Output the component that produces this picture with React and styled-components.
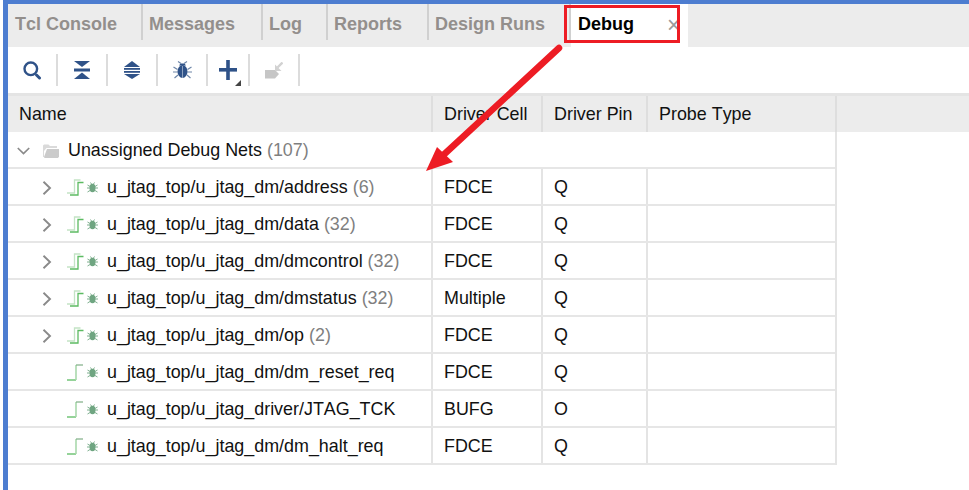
import React from "react";
import styled, { createGlobalStyle } from "styled-components";

const Global = createGlobalStyle`
  html, body { margin: 0; padding: 0; background: #fff; }
  body { font-family: "Liberation Sans", Arial, sans-serif; font-kerning: none; }
  #root { width: 969px; height: 490px; overflow: hidden; }
`;

const Frame = styled.div`
  position: relative;
  width: 966px;
  height: 490px;
  margin-left: 3px;
  box-sizing: border-box;
  border-top: 4px solid #4d7dd0;
  border-left: 5px solid #4d7dd0;
  background: #fff;
  overflow: hidden;
`;

const TabBar = styled.div`
  display: flex;
  height: 43px;
  background: #ececec;
`;

const Tab = styled.div`
  box-sizing: border-box;
  width: ${p => p.$w}px;
  height: 43px;
  padding: 9px 0 0 ${p => p.$pad}px;
  font-size: 18px;
  font-weight: 700;
  line-height: 22px;
  color: ${p => (p.$active ? "#000" : "#938f8c")};
  background: ${p => (p.$active ? "#fff" : "transparent")};
  position: relative;
  &::after {
    content: "";
    display: ${p => (p.$sep ? "block" : "none")};
    position: absolute;
    right: 0;
    top: 0;
    height: 36px;
    width: 2px;
    background: #d0d0d0;
  }
`;

const Close = styled.span`
  position: absolute;
  left: 96px;
  top: 9px;
  font-size: 23px;
  font-weight: 400;
  line-height: 24px;
  color: #9a9a9a;
`;

const Toolbar = styled.div`
  display: flex;
  align-items: center;
  height: 46px;
  background: #fff;
`;

const ToolSlot = styled.div`
  position: relative;
  display: flex;
  align-items: center;
  justify-content: center;
  width: ${p => p.$w}px;
  height: 32px;
  border-right: 2px solid #dcdcdc;
  box-sizing: border-box;
`;

const Corner = styled.span`
  position: absolute;
  right: 7px;
  bottom: 0;
  width: 0;
  height: 0;
  border-left: 6px solid transparent;
  border-bottom: 6px solid #444;
`;

const TableHead = styled.div`
  display: grid;
  grid-template-columns: 425px 110px 105px 189px 1fr;
  height: 39px;
  box-sizing: border-box;
  border-top: 3px solid #e4e4e4;
  background: #ececec;
`;

const HeadCell = styled.div`
  box-sizing: border-box;
  padding-left: 11px;
  border-right: ${p => (p.$last ? "none" : "2px solid #dedede")};
  font-size: 17.9px;
  line-height: 36px;
  color: #111;
`;

const Body = styled.div`
  width: 829px;
  box-sizing: border-box;
  border-right: 2px solid #e4e4e4;
`;

const GroupRow = styled.div`
  display: flex;
  align-items: center;
  height: 37px;
  box-sizing: border-box;
  padding: 2px 0 0 9px;
  border-bottom: 2px solid #e6e6e6;
  font-size: 17.9px;
  color: #111;
  white-space: nowrap;
`;

const Row = styled.div`
  display: grid;
  grid-template-columns: 425px 110px 1fr;
  height: 37px;
  box-sizing: border-box;
  border-bottom: 2px solid #e6e6e6;
`;

const NameCell = styled.div`
  display: flex;
  align-items: center;
  box-sizing: border-box;
  padding: 2px 0 0 34px;
  border-right: 2px solid #e4e4e4;
  font-size: 17.9px;
  color: #111;
  white-space: nowrap;
`;

const Cell = styled.div`
  display: flex;
  align-items: center;
  box-sizing: border-box;
  padding: 2px 0 0 11px;
  border-right: 2px solid #e4e4e4;
  font-size: 17.9px;
  color: #111;
`;

const PinColumn = styled.div`
  display: grid;
  grid-template-columns: 105px;
  font-size: 17.9px;
  color: #111;
`;

const PinValue = styled.span`
  display: flex;
  align-items: center;
  box-sizing: border-box;
  padding: 2px 0 0 11px;
  border-right: 2px solid #e4e4e4;
`;

const Count = styled.span`
  color: #7f7f7f;
  margin-left: 5px;
`;

const IconSlot = styled.span`
  display: inline-flex;
  width: ${p => p.$w}px;
  flex: none;
  align-items: center;
`;

const Overlay = styled.svg`
  position: absolute;
  left: -8px;
  top: -4px;
  width: 969px;
  height: 490px;
  pointer-events: none;
`;

const BLUE = "#2f5288";

const Search = () => (
  <svg width="19" height="19" viewBox="0 0 19 19" fill="none">
    <circle cx="7.8" cy="7.8" r="6.3" stroke={BLUE} strokeWidth="2.4" />
    <path d="M13.500 14l3 3" stroke={BLUE} strokeWidth="3" strokeLinecap="round" />
  </svg>
);
const Collapse = () => (
  <svg width="16" height="18" viewBox="0 0 16 18" fill={BLUE}>
    <path d="M0 0h16L8 6z" />
    <rect x="0" y="7.5" width="16" height="3" />
    <path d="M0 18h16l-8-6.500z" />
  </svg>
);
const Expand = () => (
  <svg width="16" height="18" viewBox="0 0 16 18" fill={BLUE}>
    <path d="M8 0l8 6H0z" />
    <rect x="0" y="7" width="16" height="1.800" />
    <rect x="0" y="10" width="16" height="1.800" />
    <path d="M8 18L0 13h16z" />
  </svg>
);
const BigBug = () => (
  <svg width="19" height="18" viewBox="0 0 19 18" fill="none">
    <ellipse cx="9.500" cy="10.500" rx="5" ry="6.500" fill={BLUE} />
    <path d="M6 4.500h7l-1.500-2h-4z" fill={BLUE} />
    <path d="M9.500 5v12" stroke="#8ea2c0" strokeWidth="1" />
    <path d="M5 .5l3 2M14 .5l-3 2M.5 6l4 2.500M18.500 6l-4 2.500M0 11h5M19 11h-5M1.500 17l3.500-3M17.500 17L14 14" stroke="#6e86a8" strokeWidth="1.200" />
  </svg>
);
const Plus = () => (
  <svg width="18" height="20" viewBox="0 0 18 20" fill={BLUE}>
    <rect x="7.200" y="0" width="3.600" height="20" />
    <rect x="0" y="8" width="18" height="3.600" />
  </svg>
);
const Import = () => (
  <svg width="18" height="17" viewBox="0 0 18 17" fill="#c6c6c6">
    <path d="M0 8h10l4 4-4 4.500H0z" />
    <path d="M17.500 .5l-5 5" stroke="#d2d2d2" strokeWidth="2.400" fill="none" />
    <path d="M10 2.500v6.500h6.500z" fill="#d2d2d2" />
  </svg>
);
const ChevronRight = () => (
  <svg width="10" height="14" viewBox="0 0 10 14" fill="none" stroke="#8a8a8a" strokeWidth="1.900">
    <path d="M1.500 .8L8 7l-6.500 6.200" />
  </svg>
);
const ChevronDown = () => (
  <svg width="13" height="8" viewBox="0 0 13 8" fill="none" stroke="#8a8a8a" strokeWidth="1.700">
    <path d="M.8 1l5.700 5.500L12.200 1" />
  </svg>
);
const Folder = () => (
  <svg width="16" height="14" viewBox="0 0 16 14">
    <path d="M0 1.500L1 .5h4.500L7 2h7v2H3.500L1 7v6H0z" fill="#dadada" />
    <path d="M4 5h12v7.500L15 14H1.500L1 13z" fill="#cbcbcb" />
  </svg>
);
const SignalMulti = () => (
  <svg width="17" height="17" viewBox="0 0 17 17" fill="none">
    <path d="M0 14h7.500V1h6" stroke="#c3e3c5" strokeWidth="1.300" />
    <path d="M3 16h8V3.500h5.500" stroke="#5cbb62" strokeWidth="1.300" />
  </svg>
);
const SignalSingle = () => (
  <svg width="17" height="17" viewBox="0 0 17 17" fill="none">
    <path d="M0 16h9" stroke="#5cbb62" strokeWidth="1.300" />
    <path d="M9 16V1" stroke="#a9d9ac" strokeWidth="1.600" />
    <path d="M9 1h7" stroke="#7fae85" strokeWidth="1.200" />
  </svg>
);
const SmallBug = () => (
  <svg width="11" height="11" viewBox="0 0 11 11" fill="none">
    <ellipse cx="5.500" cy="6" rx="3" ry="4.200" fill="#6fa581" />
    <path d="M.5 3l2.500 1.500M10.500 3L8 4.500M0 6h3M11 6H8M.5 10L3 8.500M10.500 10L8 8.500M3.500 .5l1 1.500M7.500 .5l-1 1.500" stroke="#7fb08f" strokeWidth="1" />
  </svg>
);

const rows = [
  ["u_jtag_top/u_jtag_dm/address", "(6)", "FDCE", "Q", true],
  ["u_jtag_top/u_jtag_dm/data", "(32)", "FDCE", "Q", true],
  ["u_jtag_top/u_jtag_dm/dmcontrol", "(32)", "FDCE", "Q", true],
  ["u_jtag_top/u_jtag_dm/dmstatus", "(32)", "Multiple", "Q", true],
  ["u_jtag_top/u_jtag_dm/op", "(2)", "FDCE", "Q", true],
  ["u_jtag_top/u_jtag_dm/dm_reset_req", "", "FDCE", "Q", false],
  ["u_jtag_top/u_jtag_driver/JTAG_TCK", "", "BUFG", "O", false],
  ["u_jtag_top/u_jtag_dm/dm_halt_req", "", "FDCE", "Q", false],
];

export default function App() {
  return (
    <Frame>
      <Global />
      <TabBar>
        <Tab $w={135} $pad={7} $sep>Tcl Console</Tab>
        <Tab $w={120} $pad={6} $sep>Messages</Tab>
        <Tab $w={65} $pad={6} $sep>Log</Tab>
        <Tab $w={101} $pad={6} $sep>Reports</Tab>
        <Tab $w={142} $pad={6} $sep>Design Runs</Tab>
        <Tab $w={117} $pad={7} $active>Debug<Close>×</Close></Tab>
      </TabBar>
      <Toolbar>
        <ToolSlot $w={50}><Search /></ToolSlot>
        <ToolSlot $w={50}><Collapse /></ToolSlot>
        <ToolSlot $w={50}><Expand /></ToolSlot>
        <ToolSlot $w={50}><BigBug /></ToolSlot>
        <ToolSlot $w={42}><Plus /><Corner /></ToolSlot>
        <ToolSlot $w={50}><Import /></ToolSlot>
      </Toolbar>
      <TableHead>
        <HeadCell>Name</HeadCell>
        <HeadCell>Driver Cell</HeadCell>
        <HeadCell>Driver Pin</HeadCell>
        <HeadCell>Probe Type</HeadCell>
        <HeadCell $last />
      </TableHead>
      <Body>
        <GroupRow>
          <IconSlot $w={26}><ChevronDown /></IconSlot>
          <IconSlot $w={25}><Folder /></IconSlot>
          Unassigned Debug Nets<Count>(107)</Count>
        </GroupRow>
        {rows.map(r => (
          <Row key={r[0]}>
            <NameCell>
              <IconSlot $w={25}>{r[4] && <ChevronRight />}</IconSlot>
              <IconSlot $w={20}>{r[4] ? <SignalMulti /> : <SignalSingle />}</IconSlot>
              <IconSlot $w={20}><SmallBug /></IconSlot>
              {r[0]}{r[1] && <Count>{r[1]}</Count>}
            </NameCell>
            <Cell>{r[2]}</Cell>
            <PinColumn><PinValue>{r[3]}</PinValue></PinColumn>
          </Row>
        ))}
      </Body>
      <Overlay viewBox="0 0 969 490">
        <rect x="565.5" y="6.500" width="113" height="35" fill="none" stroke="#ed1c24" strokeWidth="3" />
        <path d="M559 48L438 160" stroke="#ed1c24" strokeWidth="6.500" strokeLinecap="round" />
        <path d="M426 171L437 147L453 162z" fill="#ed1c24" />
      </Overlay>
    </Frame>
  );
}
